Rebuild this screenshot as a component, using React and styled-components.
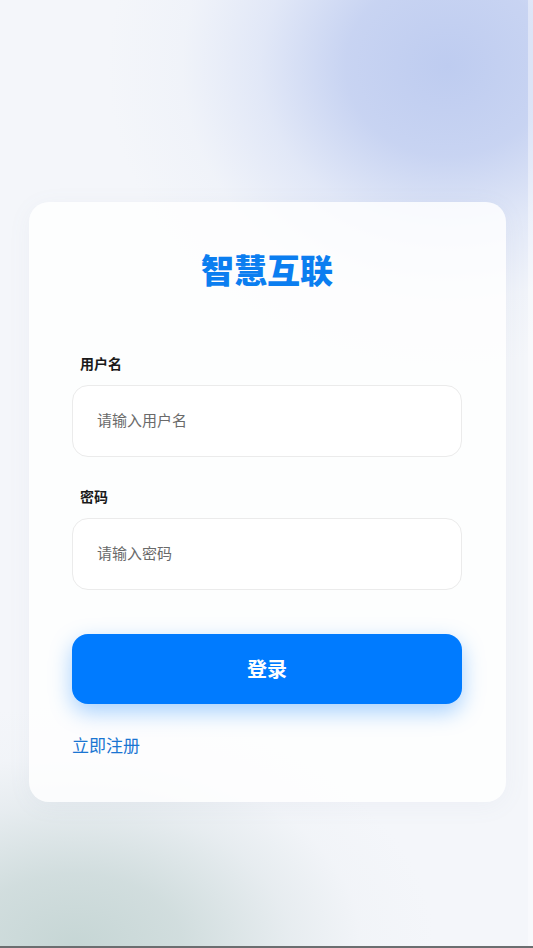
import React from "react";
import styled, { createGlobalStyle } from "styled-components";

const Global = createGlobalStyle`
  html, body { margin: 0; padding: 0; }
  body { font-family: "Noto Sans CJK SC", "Noto Sans", sans-serif; }
  * { box-sizing: border-box; }
`;

const Page = styled.div`
  min-height: 948px;
  padding-top: 202px;
  padding-left: 29px;
  background:
    radial-gradient(ellipse 340px 300px at 84% 7%, rgba(190, 204, 240, 1) 0%, rgba(194, 207, 241, 0.88) 30%, rgba(210, 220, 245, 0.55) 55%, rgba(225, 232, 247, 0.22) 78%, rgba(235, 240, 248, 0) 100%),
    radial-gradient(ellipse 360px 240px at 14% 100%, rgba(198, 214, 213, 1) 0%, rgba(203, 217, 217, 0.85) 30%, rgba(218, 227, 230, 0.5) 60%, rgba(232, 237, 241, 0.2) 80%, rgba(238, 242, 245, 0) 100%),
    #f4f6fa;
  box-shadow: inset -5px 0 0 rgba(255, 255, 255, 0.4);
  border-bottom: 2px solid #6b6e70;
`;

const Card = styled.div`
  width: 477px;
  padding: 47px 44px 45px 43px;
  border-radius: 20px;
  background: rgba(255, 255, 255, 0.82);
  box-shadow: 0 4px 24px rgba(120, 140, 170, 0.06);
  display: flex;
  flex-direction: column;
`;

const Title = styled.h1`
  margin: 0 0 63px;
  text-align: center;
  font-size: 33px;
  line-height: 41px;
  font-weight: 900;
  color: #0b7ef0;
`;

const Field = styled.div`
  display: flex;
  flex-direction: column;
  gap: 12px;
  margin-bottom: ${(p) => p.$mb}px;
`;

const Label = styled.label`
  padding-left: 8px;
  font-size: 14px;
  line-height: 20px;
  font-weight: 700;
  color: #1a1a1a;
`;

const Input = styled.input`
  height: 72px;
  width: 100%;
  border: 1.5px solid #ebebeb;
  border-radius: 16px;
  background: #fff;
  padding: 0 24px 4px;
  font-family: inherit;
  font-size: 15px;
  color: #333;
  outline: none;
  &::placeholder { color: #6a6a6a; }
`;

const Button = styled.button`
  height: 70px;
  width: 100%;
  border: none;
  border-radius: 16px;
  background: #007bff;
  color: #fff;
  font-family: inherit;
  font-size: 20px;
  font-weight: 700;
  padding-bottom: 2px;
  box-shadow: 0 8px 22px rgba(0, 123, 255, 0.35);
  cursor: pointer;
  margin-bottom: 29px;
`;

const Link = styled.a`
  align-self: flex-start;
  font-size: 17px;
  line-height: 24px;
  color: #1a75d2;
  text-decoration: none;
  cursor: pointer;
`;

export default function App() {
  return (
    <>
      <Global />
      <Page>
        <Card>
          <Title>智慧互联</Title>
          <Field $mb={29}>
            <Label>用户名</Label>
            <Input placeholder="请输入用户名" />
          </Field>
          <Field $mb={44}>
            <Label>密码</Label>
            <Input type="password" placeholder="请输入密码" />
          </Field>
          <Button>登录</Button>
          <Link>立即注册</Link>
        </Card>
      </Page>
    </>
  );
}
